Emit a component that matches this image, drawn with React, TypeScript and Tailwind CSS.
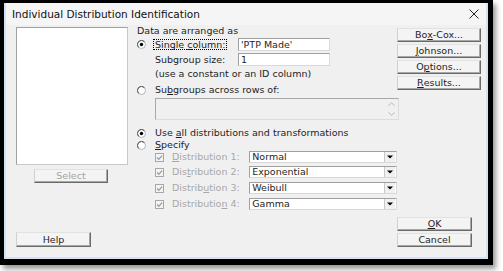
import React from "react";

function Radio({ checked }: { checked?: boolean }) {
  return (
    <svg width="9" height="9" viewBox="0 0 9 9" className="shrink-0">
      <circle cx="4.5" cy="4.5" r="4" fill="#ffffff" stroke="#b5b5b5" strokeWidth="1" />
      <path d="M1.6 7.4 A4 4 0 0 1 7.4 1.6" stroke="#505050" fill="none" strokeWidth="1" />
      {checked && <circle cx="4.5" cy="4.5" r="1.7" fill="#000000" />}
    </svg>
  );
}

function Check() {
  return (
    <svg width="9" height="9" viewBox="0 0 9 9" className="shrink-0">
      <rect x="0.5" y="0.5" width="8" height="8" fill="#f4f4f4" stroke="#a8a8a8" />
      <path d="M2 4.4 L3.8 6.3 L7.2 2.6" stroke="#a0a0a0" strokeWidth="1.4" fill="none" />
    </svg>
  );
}

function Btn({ children, className, disabled }: { children: React.ReactNode; className: string; disabled?: boolean }) {
  return (
    <div
      className={
        "flex items-center justify-center bg-[#f4f4f4] border border-t-[#e2e2e2] border-l-[#d0d0d0] border-r-[#6a6a6a] border-b-[#6a6a6a] shadow-[inset_-1px_-1px_0_#a8a8a8] leading-none " +
        (disabled ? "text-[#a3a3a3] " : "text-[#1e1e1e] ") +
        className
      }
    >
      {children}
    </div>
  );
}

function Combo({ value }: { value: string }) {
  return (
    <div className="w-[149px] h-[12px] bg-white border border-[#a0a0a0] border-b-[#d8d8d8] border-r-[#d8d8d8] flex items-center">
      <span className="pl-[2px] flex-1 leading-none text-[#1e1e1e]">{value}</span>
      <div className="w-[11px] h-[10px] mr-[1px] bg-[#f0f0f0] border-l border-[#c8c8c8] flex items-center justify-center">
        <svg width="6" height="4" viewBox="0 0 6 4">
          <path d="M0 0.5 H6 L3 3.5 Z" fill="#000" />
        </svg>
      </div>
    </div>
  );
}

export default function App() {
  return (
    <div className="w-[503px] h-[271px] bg-white font-['DejaVu_Sans',sans-serif] text-[9.5px] text-[#1e1e1e] overflow-hidden">
      <div className="w-[493px] h-[265px] border-l-[4px] border-t-[3px] border-r-[5px] border-b-[6px] border-black shadow-[3px_4px_5px_rgba(0,0,0,0.4)]">
        <div className="h-full border-l-2 border-r-2 border-b-2 border-[#d4e3f3] flex flex-col">
          {/* title bar */}
          <div className="h-[22px] bg-[#f5f5f5] flex items-center pl-[6px] pr-[7px] shrink-0">
            <span className="text-[10.5px] leading-none text-[#111]">Individual Distribution Identification</span>
            <svg width="10" height="10" viewBox="0 0 10 10" className="ml-auto">
              <path d="M0.5 0.5 L9.5 9.5 M9.5 0.5 L0.5 9.5" stroke="#222" strokeWidth="1" />
            </svg>
          </div>
          {/* body */}
          <div className="flex-1 bg-[#f0f0f0] flex pl-[10px]">
            {/* left column */}
            <div className="w-[112px] flex flex-col pt-[2px]">
              <div className="h-[138px] bg-white border border-[#a0a0a0] border-b-[#c8c8c8] border-r-[#c8c8c8]" />
              <Btn disabled className="ml-[18px] mt-[4px] w-[74px] h-[14px]">Select</Btn>
              <Btn className="mt-[49px] w-[75px] h-[15px]">Help</Btn>
            </div>
            {/* middle column */}
            <div className="w-[260px] ml-[9px] flex flex-col">
              <div className="h-[12px] leading-[12px]">Data are arranged as</div>
              <div className="h-[13px] mt-[1px] flex items-center">
                <div className="w-[101px] flex items-center">
                  <Radio checked />
                  <span className="ml-[7px] border border-dotted border-black px-[1px] leading-[9px]">
                    Single <span className="underline">c</span>olumn:
                  </span>
                </div>
                <div className="w-[92px] h-[13px] bg-white border border-[#a0a0a0] border-b-[#dadada] border-r-[#dadada] flex items-center pl-[2px] leading-none">
                  'PTP Made'
                </div>
              </div>
              <div className="h-[13px] mt-[2px] flex items-center">
                <div className="w-[101px] pl-[18px] leading-none">Subgroup size:</div>
                <div className="w-[92px] h-[13px] bg-white border border-[#a0a0a0] border-b-[#dadada] border-r-[#dadada] flex items-center pl-[2px] leading-none">
                  1
                </div>
              </div>
              <div className="h-[12px] mt-[2px] pl-[18px] leading-[12px]">(use a constant or an ID column)</div>
              <div className="h-[12px] mt-[4px] flex items-center">
                <Radio />
                <span className="ml-[9px] leading-none">
                  Su<span className="underline">b</span>groups across rows of:
                </span>
              </div>
              <div className="ml-[18px] mt-[2px] w-[244px] h-[22px] bg-[#f0f0f0] border border-[#a8a8a8] border-b-[#dcdcdc] border-r-[#dcdcdc] flex justify-end">
                <div className="w-[11px] flex flex-col items-center justify-between py-[3px] mr-[1px]">
                  <svg width="7" height="4" viewBox="0 0 7 4">
                    <path d="M0.5 3.5 L3.5 0.8 L6.5 3.5" stroke="#b8b8b8" fill="none" strokeWidth="1" />
                  </svg>
                  <svg width="7" height="4" viewBox="0 0 7 4">
                    <path d="M0.5 0.5 L3.5 3.2 L6.5 0.5" stroke="#b8b8b8" fill="none" strokeWidth="1" />
                  </svg>
                </div>
              </div>
              <div className="h-[12px] mt-[7px] flex items-center">
                <Radio checked />
                <span className="ml-[9px] leading-none">
                  Use <span className="underline">a</span>ll distributions and transformations
                </span>
              </div>
              <div className="h-[12px] flex items-center">
                <Radio />
                <span className="ml-[9px] leading-none">
                  <span className="underline">S</span>pecify
                </span>
              </div>
              {[
                { pre: "", u: "D", post: "istribution 1:", v: "Normal", mt: "mt-0" },
                { pre: "Dis", u: "t", post: "ribution 2:", v: "Exponential", mt: "mt-[3px]" },
                { pre: "Distrib", u: "u", post: "tion 3:", v: "Weibull", mt: "mt-[4px]" },
                { pre: "Distributio", u: "n", post: " 4:", v: "Gamma", mt: "mt-[4px]" },
              ].map((r) => (
                <div key={r.v} className={"h-[12px] flex items-center " + r.mt}>
                  <div className="w-[113px] pl-[18px] flex items-center">
                    <Check />
                    <span className="ml-[8px] leading-none text-[#a8a8a8]">
                      {r.pre}
                      <span className="underline">{r.u}</span>
                      {r.post}
                    </span>
                  </div>
                  <Combo value={r.v} />
                </div>
              ))}
            </div>
            {/* right column */}
            <div className="w-[84px] flex flex-col pt-[3px]">
              <Btn className="w-[84px] h-[14px]">
                Bo<span className="underline">x</span>-Cox...
              </Btn>
              <Btn className="w-[84px] h-[14px] mt-[2px]">
                <span className="underline">J</span>ohnson...
              </Btn>
              <Btn className="w-[84px] h-[14px] mt-[2px]">
                O<span className="underline">p</span>tions...
              </Btn>
              <Btn className="w-[84px] h-[14px] mt-[2px]">
                <span className="underline">R</span>esults...
              </Btn>
              <Btn className="w-[75px] h-[14px] mt-[127px]">
                <span className="underline">O</span>K
              </Btn>
              <Btn className="w-[75px] h-[14px] mt-[2px]">Cancel</Btn>
            </div>
          </div>
        </div>
      </div>
    </div>
  );
}
